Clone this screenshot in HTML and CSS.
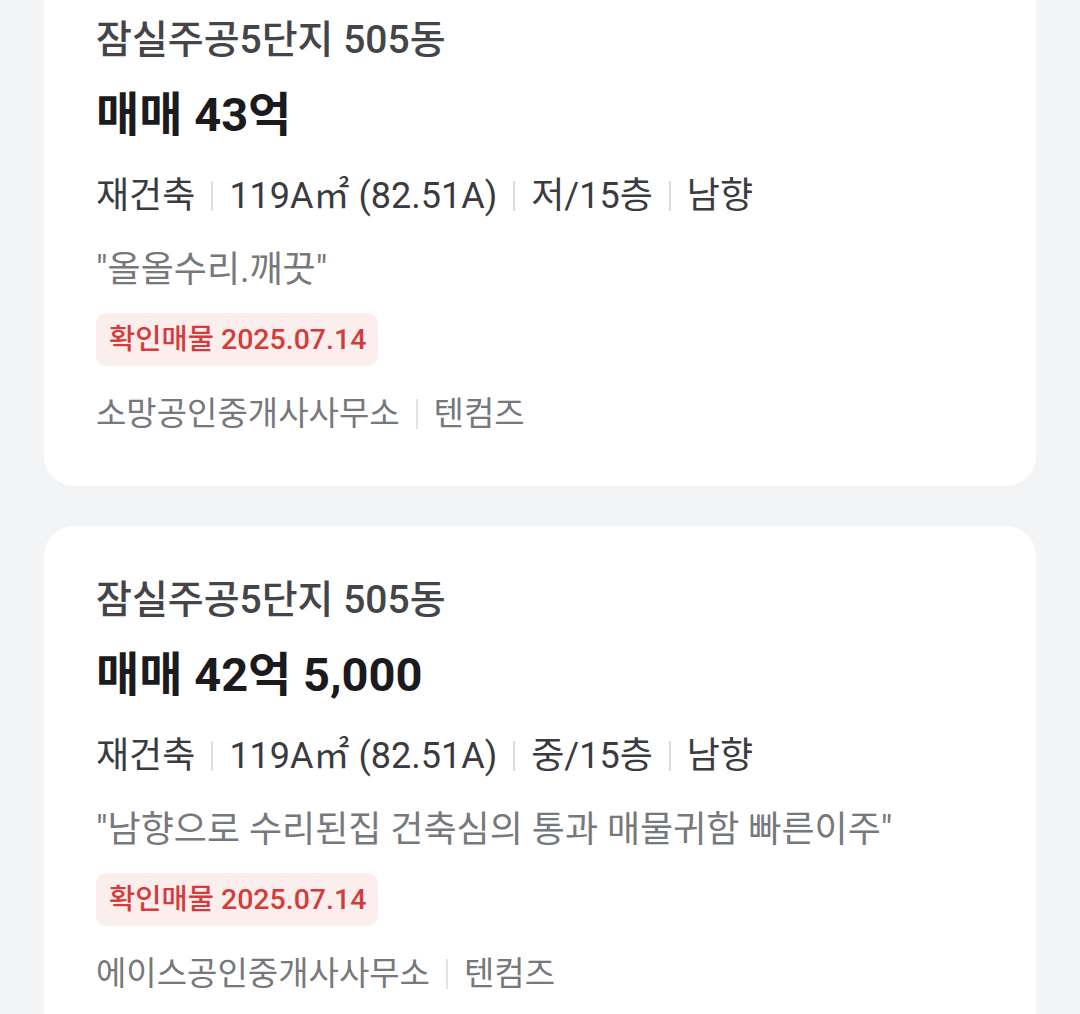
FILE: index.html
```html
<!DOCTYPE html>
<html lang="ko">
<head>
<meta charset="utf-8">
<link rel="stylesheet" href="styles.css">
</head>
<body>
<div class="list">
  <div class="card first">
    <div class="title">잠실주공5단지 505동</div>
    <div class="price">매매 43억</div>
    <div class="info"><span>재건축</span><i class="sep"></i><span>119A㎡ (82.51A)</span><i class="sep"></i><span>저/15층</span><i class="sep"></i><span>남향</span></div>
    <div class="quote">"올올수리.깨끗"</div>
    <div class="badge">확인매물 2025.07.14</div>
    <div class="agent"><span>소망공인중개사사무소</span><i class="sep light"></i><span>텐컴즈</span></div>
  </div>
  <div class="card">
    <div class="title">잠실주공5단지 505동</div>
    <div class="price">매매 42억 5,000</div>
    <div class="info"><span>재건축</span><i class="sep"></i><span>119A㎡ (82.51A)</span><i class="sep"></i><span>중/15층</span><i class="sep"></i><span>남향</span></div>
    <div class="quote">"남향으로 수리된집 건축심의 통과 매물귀함 빠른이주"</div>
    <div class="badge">확인매물 2025.07.14</div>
    <div class="agent"><span>에이스공인중개사사무소</span><i class="sep light"></i><span>텐컴즈</span></div>
  </div>
</div>
</body>
</html>
```
FILE: styles.css
```css
html, body {
  margin: 0;
  padding: 0;
  background: #f3f4f6;
  font-family: Roboto, "Noto Sans CJK KR", sans-serif;
  overflow: hidden;
}
.list {
  display: flex;
  flex-direction: column;
  gap: 40px;
  padding: 0 44px;
  margin-top: -34px;
}
.card {
  background: #ffffff;
  border-radius: 30px;
  padding: 50px 52px 52px;
  display: flex;
  flex-direction: column;
  align-items: flex-start;
}
.title {
  font-size: 39px;
  line-height: 48px;
  font-weight: 500;
  color: #444549;
}
.price {
  margin-top: 23px;
  font-size: 47px;
  line-height: 56px;
  font-weight: 700;
  color: #1b1b1d;
}
.info {
  margin-top: 31px;
  font-size: 36px;
  line-height: 44px;
  color: #3a3b3f;
  display: flex;
  align-items: center;
}
.sep {
  display: inline-block;
  width: 2px;
  height: 30px;
  background: #dcdcdc;
  margin: 0 16px;
}
.sep.light {
  background: #e2e2e2;
}
.quote {
  margin-top: 32px;
  font-size: 36px;
  line-height: 40px;
  color: #77787c;
}
.badge {
  margin-top: 23px;
  height: 53px;
  line-height: 53px;
  padding: 0 12px 0 13px;
  border-radius: 10px;
  background: #fdeeee;
  color: #d43c3c;
  font-size: 28.5px;
  font-weight: 500;
}
.agent {
  margin-top: 28px;
  font-size: 33px;
  line-height: 40px;
  color: #77787c;
  display: flex;
  align-items: center;
}
```
